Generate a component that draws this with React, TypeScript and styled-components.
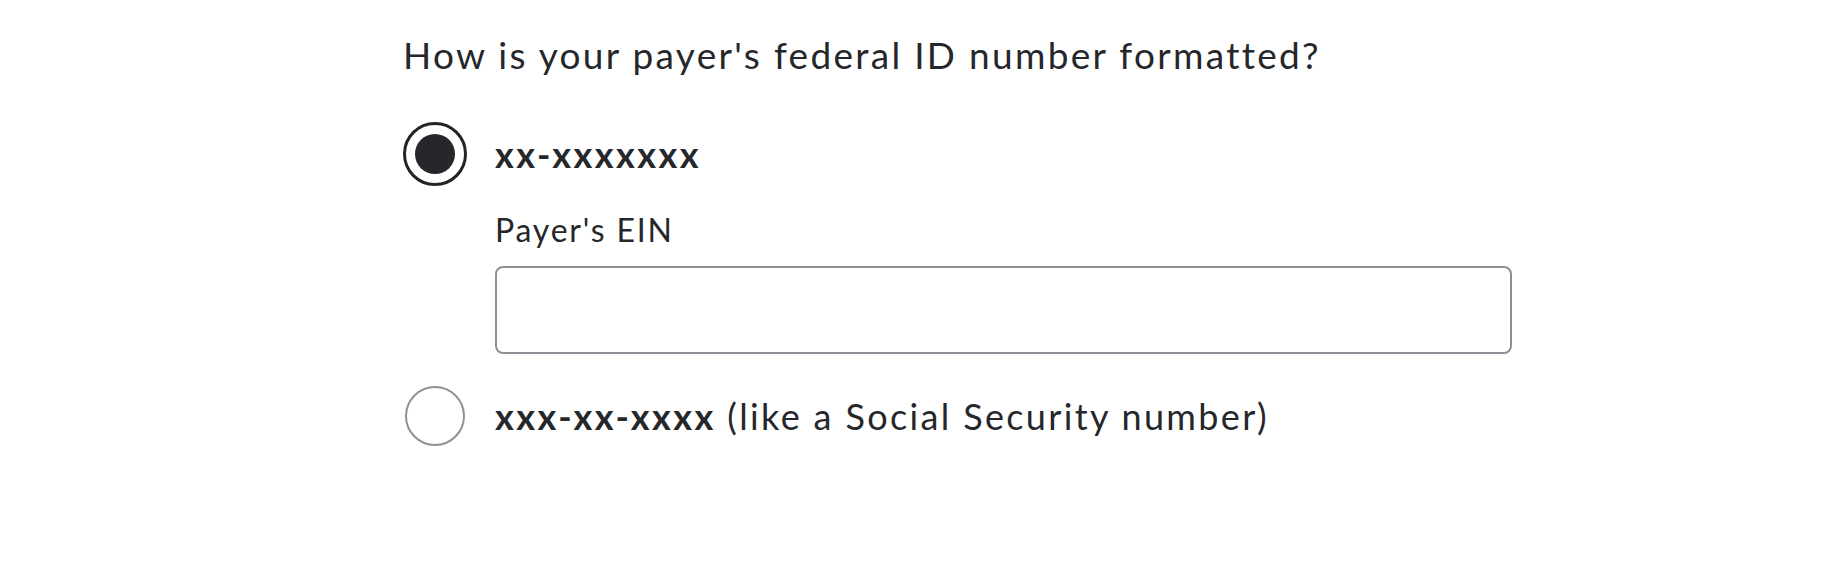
import styled, { createGlobalStyle } from "styled-components";

const GlobalStyle = createGlobalStyle`
  html, body {
    margin: 0;
    padding: 0;
    background: #ffffff;
  }
  body {
    font-family: Lato, "Noto Sans", "Liberation Sans", sans-serif;
    color: #25272b;
  }
`;

const Page = styled.div`
  padding: 33px 0 0 403px;
`;

const Question = styled.fieldset`
  margin: 0;
  padding: 0;
  border: 0;
  width: 1109px;
`;

const Heading = styled.legend`
  padding: 0;
  margin: 0 0 45px;
  font-size: 37px;
  line-height: 44px;
  letter-spacing: 2.3px;
  font-weight: 400;
`;

const OptionRow = styled.label`
  display: grid;
  grid-template-columns: 64px 1fr;
  column-gap: 28px;
  align-items: center;
  height: 64px;
  cursor: pointer;
`;

const RadioDot = styled.span<{ $checked?: boolean }>`
  box-sizing: border-box;
  justify-self: center;
  display: flex;
  align-items: center;
  justify-content: center;
  width: ${(p) => (p.$checked ? 64 : 60)}px;
  height: ${(p) => (p.$checked ? 64 : 60)}px;
  border-radius: 50%;
  border: ${(p) => (p.$checked ? "3px solid #222326" : "2px solid #8d9096")};
  background: #fff;

  &::after {
    content: "";
    display: ${(p) => (p.$checked ? "block" : "none")};
    width: 40px;
    height: 40px;
    border-radius: 50%;
    background: #25272b;
  }
`;

const OptionText = styled.span`
  font-size: 36px;
  line-height: 64px;
  letter-spacing: 2.35px;
  white-space: nowrap;
`;

const Mask = styled.strong`
  font-weight: 700;
  letter-spacing: 2.45px;
`;

const SubField = styled.div`
  display: flex;
  flex-direction: column;
  margin: 26px 0 30px 92px;
`;

const FieldLabel = styled.span`
  font-size: 32px;
  line-height: 36px;
  letter-spacing: 1.8px;
  margin-bottom: 18px;
`;

const TextInput = styled.input`
  box-sizing: border-box;
  width: 1017px;
  height: 88px;
  border: 2px solid #8d9096;
  border-radius: 8px;
  padding: 0 20px;
  font-family: inherit;
  font-size: 32px;
  color: #25272b;
  outline: none;
  background: #fff;
`;

const HiddenRadio = styled.input`
  position: absolute;
  opacity: 0;
  width: 0;
  height: 0;
`;

export default function App() {
  return (
    <>
      <GlobalStyle />
      <Page>
        <Question>
          <Heading>How is your payer's federal ID number formatted?</Heading>
          <OptionRow>
            <HiddenRadio type="radio" name="idFormat" defaultChecked />
            <RadioDot $checked />
            <OptionText>
              <Mask>xx-xxxxxxx</Mask>
            </OptionText>
          </OptionRow>
          <SubField>
            <FieldLabel>Payer's EIN</FieldLabel>
            <TextInput type="text" aria-label="Payer's EIN" />
          </SubField>
          <OptionRow>
            <HiddenRadio type="radio" name="idFormat" />
            <RadioDot />
            <OptionText>
              <Mask>xxx-xx-xxxx</Mask> (like a Social Security number)
            </OptionText>
          </OptionRow>
        </Question>
      </Page>
    </>
  );
}
